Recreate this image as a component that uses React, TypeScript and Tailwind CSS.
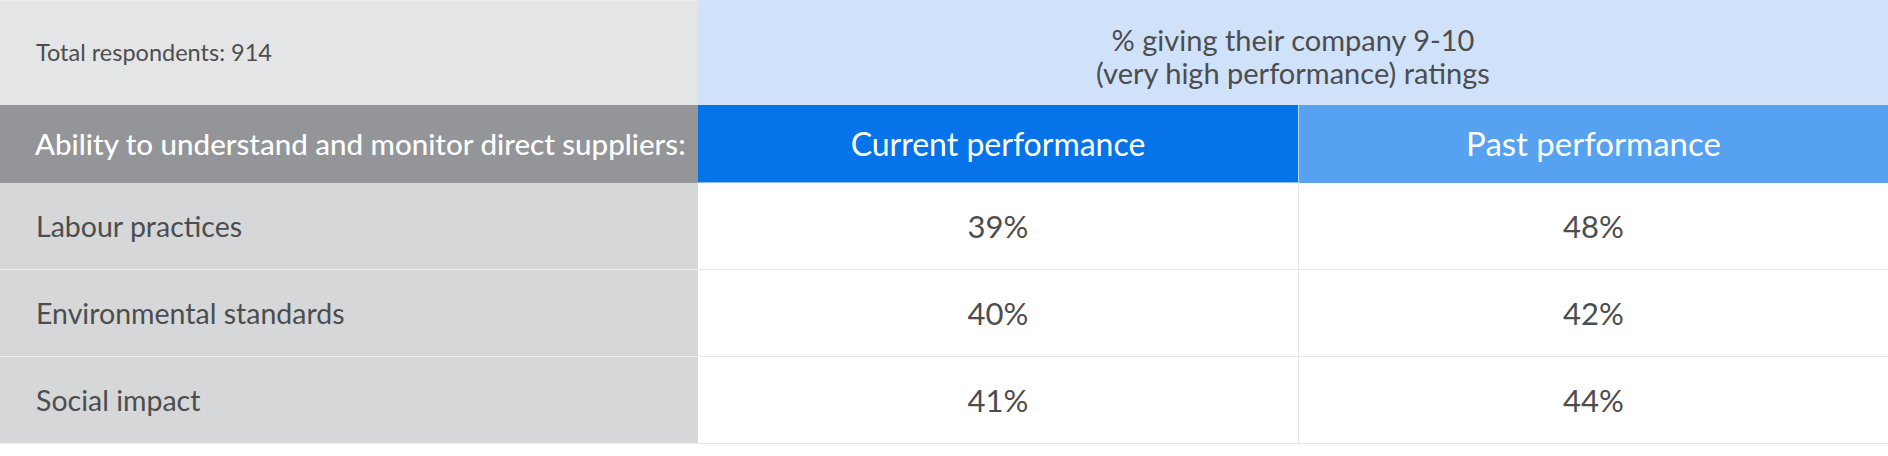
const rows = [
  { label: 'Labour practices', current: '39%', past: '48%' },
  { label: 'Environmental standards', current: '40%', past: '42%' },
  { label: 'Social impact', current: '41%', past: '44%' },
];

export default function App() {
  return (
    <div className="w-[1888px] h-[456px] bg-white font-['Lato','Noto_Sans',sans-serif] text-[#4d4d4f]">
      <div className="grid grid-cols-[698px_600px_590px]">
        <div className="h-[105px] bg-[#e4e5e7] border-t border-[#ececee] flex items-center pl-[36px] text-[23.5px]">
          Total respondents: 914
        </div>
        <div className="col-span-2 h-[105px] bg-[#cfe2f9] flex flex-col items-center justify-center pt-[6px] text-[29px] leading-[33px] text-center">
          <span>% giving their company 9-10</span>
          <span>(very high performance) ratings</span>
        </div>

        <div className="h-[78px] bg-[#939598] flex items-center pl-[35px] text-white text-[29.5px] font-medium">
          Ability to understand and monitor direct suppliers:
        </div>
        <div className="h-[78px] bg-[#0674e8] border-b border-[#8cbdf3] flex items-center justify-center text-white text-[32px]">
          Current performance
        </div>
        <div className="h-[78px] bg-[#56a1f0] border-l border-[#b9d7f7] flex items-center justify-center text-white text-[33px]">
          Past performance
        </div>

        {rows.map((row) => (
          <div key={row.label} className="contents">
            <div className="h-[87px] bg-[#d6d7d9] border-b border-[#eeeff0] flex items-center pl-[36px] text-[28.5px]">
              {row.label}
            </div>
            <div className="h-[87px] border-b border-[#e6e7e9] flex items-center justify-center text-[31px]">
              {row.current}
            </div>
            <div className="h-[87px] border-b border-l border-[#e6e7e9] flex items-center justify-center text-[31px]">
              {row.past}
            </div>
          </div>
        ))}
      </div>
    </div>
  );
}
